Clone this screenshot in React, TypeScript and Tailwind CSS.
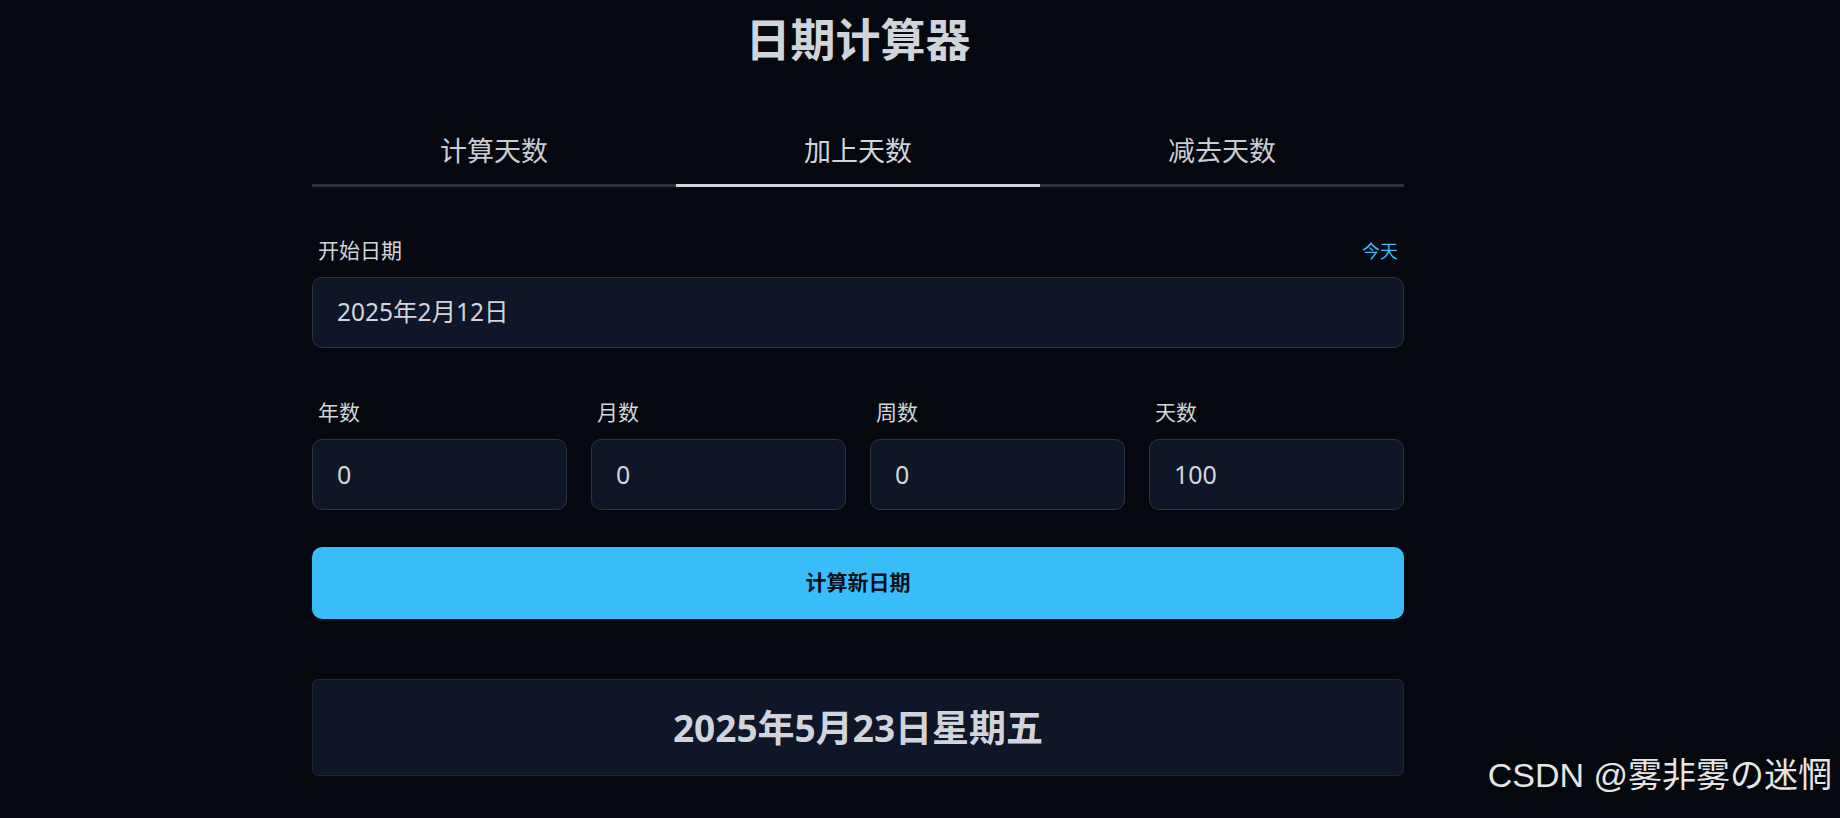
import React from "react";

const font = "font-['Noto_Sans','Noto_Sans_CJK_SC',sans-serif]";

function NumField({ label, value }: { label: string; value: string }) {
  return (
    <div className="flex flex-col">
      <div className="h-[28px] flex items-center px-[6px] text-[21px] text-[#d1d5db]">{label}</div>
      <div className="mt-[12px] h-[71px] rounded-[10px] border border-[#2b3444] bg-[#0e1628] flex items-center pl-[24px] text-[25px] text-[#d1d5db]">
        {value}
      </div>
    </div>
  );
}

export default function App() {
  const tabs = ["计算天数", "加上天数", "减去天数"];
  return (
    <div className={`relative min-h-screen w-full bg-[#05080f] ${font}`}>
      <div className="ml-[312px] w-[1092px] flex flex-col">
        <div className="h-[78px] flex items-center justify-center">
          <h1 className="text-[45px] font-bold leading-none text-[#d1d5db]">日期计算器</h1>
        </div>
        <div className="mt-[40px] grid grid-cols-3">
          {tabs.map((t, i) => (
            <div
              key={t}
              className={
                i === 1
                  ? "h-[69px] flex items-center justify-center border-b-[3px] border-[#d1d5db] text-[27px] text-[#d1d5db]"
                  : "h-[69px] flex items-center justify-center border-b-[3px] border-[#2c3039] text-[27px] text-[#c9cdd3]"
              }
            >
              {t}
            </div>
          ))}
        </div>
        <div className="mt-[50px] h-[28px] flex items-center justify-between px-[6px]">
          <span className="text-[21px] text-[#d1d5db]">开始日期</span>
          <span className="text-[18px] text-[#38bdf8]">今天</span>
        </div>
        <div className="mt-[12px] h-[71px] rounded-[10px] border border-[#2b3444] bg-[#0e1628] flex items-center pl-[24px] text-[24.5px] text-[#d1d5db]">
          2025年2月12日
        </div>
        <div className="mt-[51px] grid grid-cols-4 gap-6">
          <NumField label="年数" value="0" />
          <NumField label="月数" value="0" />
          <NumField label="周数" value="0" />
          <NumField label="天数" value="100" />
        </div>
        <button className="mt-[37px] h-[72px] rounded-[10px] bg-[#38bdf8] flex items-center justify-center text-[21px] font-bold text-[#0a0f1a]">
          计算新日期
        </button>
        <div className="mt-[60px] h-[97px] rounded-[6px] border border-[#1e2638] bg-[#0e1628] flex items-center justify-center">
          <span className="text-[37px] font-bold text-[#d1d5db]">2025年5月23日星期五</span>
        </div>
      </div>
      <div className="absolute right-[8px] top-[758px] text-[34px] text-[#e5e5e5] font-['Liberation_Sans','Noto_Sans_CJK_JP',sans-serif] leading-none">
        CSDN @雾非雾の迷惘
      </div>
    </div>
  );
}
